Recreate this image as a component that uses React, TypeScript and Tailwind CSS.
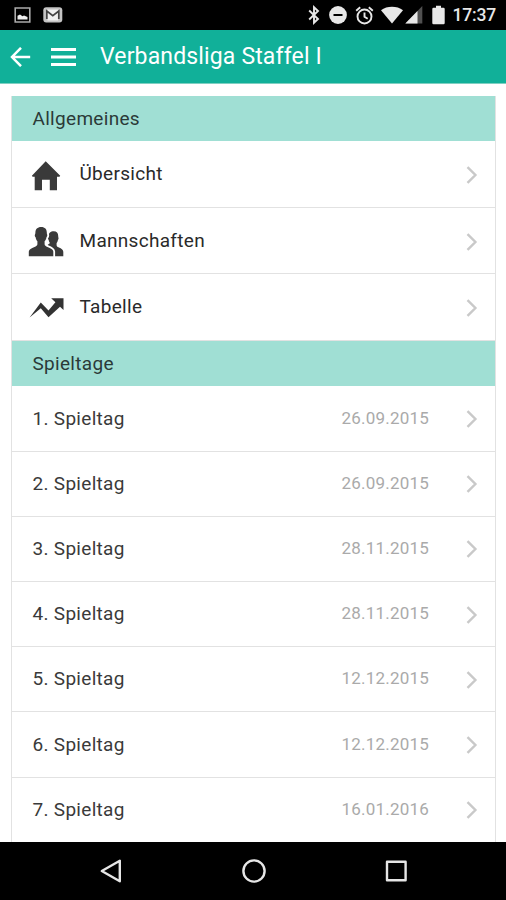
import type { ReactNode } from "react";

const links: { label: string; icon: ReactNode }[] = [
    {
        label: "Übersicht",
        icon: (
            <svg width="36" height="36" viewBox="0 0 36 36" fill="#3a3a3a">
                <path d="M17.700 4.200 32.200 18.700 31.500 19.800H29V33.300H21.800V22.800H14V33.300H6.700V19.800H4.600L3.900 18.700z" />
            </svg>
        ),
    },
    {
        label: "Mannschaften",
        icon: (
            <svg width="36" height="36" viewBox="0 0 36 36" fill="#3a3a3a">
                <path d="M25.700 8.200c3 0 4.500 1.900 4.500 4.800 0 .8.1 1.400.3 1.900.2.700-.1 1.600-.6 2.100-.2 1.500-.7 2.400-1.300 3v2.300c.1 1.200 1 1.700 2.300 2.300 2.600 1.100 4.100 2 4.400 4.100v4.500H22l-4-10 4-3.200V20c-.6-.6-1.100-1.500-1.300-3-.5-.5-.8-1.400-.6-2.100.2-.5.400-1.100.4-1.900 0-2.900 2.200-4.800 5.200-4.800z" />
                <path stroke="#fff" strokeWidth="3.600" paintOrder="stroke" d="M13.200 4c3.800 0 5.600 2.200 5.600 5.600 0 1 .1 1.700.4 2.200.3.700-.1 1.900-.7 2.500-.3 1.800-.9 3.100-1.900 3.900v3c.2 1.400 1.200 2 2.900 2.700 3.300 1.300 5.500 2.200 5.800 4.600v4.700H.8v-4.700c.4-2.400 2.400-3.300 5.700-4.600 1.700-.7 2.700-1.300 2.900-2.700v-3c-1-.8-1.500-2.100-1.800-3.900-.7-.6-1-1.800-.7-2.500.3-.5.500-1.200.5-2.200C7.400 6.200 9.400 4 13.200 4z" />
            </svg>
        ),
    },
    {
        label: "Tabelle",
        icon: (
            <svg width="36" height="36" viewBox="0 0 36 36" fill="#333">
                <path d="M23.200 8.300H35.500V20L32 16.800 20.500 27.200 12.800 18.300 1.600 27.400 12.800 12.600 20.500 20.500 27.400 12.200z" />
            </svg>
        ),
    },
];

const matchdays = [
    "26.09.2015",
    "26.09.2015",
    "28.11.2015",
    "28.11.2015",
    "12.12.2015",
    "12.12.2015",
    "16.01.2016",
];

const Chevron = () => (
    <svg className="mt-px shrink-0" width="12" height="20" viewBox="0 0 12 20" fill="none" stroke="#c9c9c9" strokeWidth="2.400">
        <path d="M1.500 2.200 9.400 10 1.500 17.800" />
    </svg>
);

const StatusBar = () => (
    <div className="flex h-[30px] shrink-0 items-center justify-between bg-black pr-[10px] pl-[14px] text-[#e8e8e8]">
        <div className="flex items-center gap-[12px]">
            <svg width="17" height="16" viewBox="0 0 17 16">
                <path d="M1.200 1h14.600v14H1.200z" fill="none" stroke="#aaa" strokeWidth="1.600" />
                <path d="M3.500 12.500V8.800L6 7.500l2.500 1.800 1.500-.8 3.500 1.500v2.500z" fill="#eee" />
            </svg>
            <svg width="20" height="16" viewBox="0 0 20 16">
                <rect x=".3" y=".3" width="19" height="15.200" rx="3" fill="#c4c4c4" />
                <path d="M4.500 2.500h10.600v11H4.500z" fill="#f0f0f0" />
                <path d="M3.800 12V4l6 4.600 6-4.600v8" fill="none" stroke="#444" strokeWidth="1.700" />
            </svg>
        </div>
        <div className="flex items-center">
            <svg width="12" height="20" viewBox="0 0 12 20" fill="none" stroke="currentColor" strokeWidth="1.900">
                <path d="M1.200 5.500 10 14 6 17.800V2.200L10 6 1.200 14.500" />
            </svg>
            <svg className="ml-[9px]" width="18" height="18" viewBox="0 0 18 18">
                <circle cx="9" cy="9" r="8.900" fill="currentColor" />
                <path d="M4.500 9h9" stroke="#000" strokeWidth="2" />
            </svg>
            <svg className="ml-[8px]" width="19" height="19" viewBox="0 0 19 19" fill="none" stroke="currentColor" strokeWidth="1.900">
                <circle cx="9.500" cy="10.500" r="7" />
                <path d="M9.500 6.500v4.300l3.200 2M1.200 4.700 5.200 1.300M17.800 4.700 13.800 1.300" />
            </svg>
            <svg className="ml-[7px]" width="22" height="18" viewBox="0 0 22 18">
                <path d="M0 4.200C6-.3 16-.3 22 4.200L11 17.500z" fill="currentColor" />
            </svg>
            <svg className="ml-[2px]" width="18" height="18" viewBox="0 0 18 18">
                <path d="M17.300 0v17.500H.3z" fill="#505050" />
                <path d="M12.500 5v12.500H.3z" fill="currentColor" />
            </svg>
            <svg className="ml-[9px]" width="13" height="20" viewBox="0 0 13 20" fill="currentColor">
                <path d="M4 .8h5v2h2.500q1.200 0 1.200 1.200v14q0 1.300-1.200 1.300h-10Q.3 19.300.3 18V4Q.3 2.800 1.500 2.800H4z" />
            </svg>
            <span className="mt-[2px] ml-[8px] text-[17.500px] leading-none font-medium tracking-[-0.200px]">17:37</span>
        </div>
    </div>
);

const AppBar = () => (
    <header className="flex h-[54px] shrink-0 items-center border-b border-[#7fd0c2] bg-[#11b099] pl-[10px] text-white">
        <svg width="21" height="20" viewBox="0 0 21 20" fill="none" stroke="currentColor" strokeWidth="2.500">
            <path d="M11 .8 2 10l9 9.200M2 10h18.200" />
        </svg>
        <svg className="ml-[20px]" width="25" height="20" viewBox="0 0 25 20" fill="none" stroke="currentColor" strokeWidth="3">
            <path d="M0 2.500h25M0 10h25M0 17.500h25" />
        </svg>
        <h1 className="ml-[24px] text-[23px] leading-none font-normal tracking-[0.150px]">Verbandsliga Staffel I</h1>
    </header>
);

const SectionTitle = ({ children }: { children: ReactNode }) => (
    <h2 className="flex h-[45.300px] items-center bg-[#a0dfd4] pt-px pl-[20.500px] text-[19px] tracking-[0.300px] text-[#2b3a38]">
        {children}
    </h2>
);

const NavBar = () => (
    <nav className="flex h-[58px] shrink-0 items-center justify-center gap-[119px] bg-black text-[#e6e6e6]">
        <svg width="24" height="26" viewBox="0 0 24 26" fill="none" stroke="currentColor" strokeWidth="2.400" strokeLinejoin="round">
            <path d="M22.800 2.700v20.600L4.800 13z" />
        </svg>
        <svg width="26" height="26" viewBox="0 0 26 26" fill="none" stroke="currentColor" strokeWidth="2.400">
            <circle cx="14" cy="13" r="10.600" />
        </svg>
        <svg width="24" height="26" viewBox="0 0 24 26" fill="none" stroke="currentColor" strokeWidth="2.400" strokeLinejoin="round">
            <path d="M2 3.800h18.600v18.400H2z" />
        </svg>
    </nav>
);

const App = () => {
    return (
        <div className="flex h-[900px] w-[506px] flex-col overflow-hidden bg-white font-[Roboto,sans-serif]">
            <StatusBar />
            <AppBar />
            <main className="min-h-0 flex-1 overflow-hidden pt-[12px] pr-[10px] pl-[11px]">
                <div className="border-x border-[#e2e2e2]">
                    <SectionTitle>Allgemeines</SectionTitle>
                    {links.map((link) => (
                        <div key={link.label} className="flex h-[66.600px] items-center border-b border-[#e2e2e2] pt-px pr-[17px] pl-[16px]">
                            {link.icon}
                            <span className="ml-[15.500px] flex-1 pb-[0.600px] text-[19px] tracking-[0.300px] text-[#2a2a2a]">{link.label}</span>
                            <Chevron />
                        </div>
                    ))}
                    <SectionTitle>Spieltage</SectionTitle>
                    {matchdays.map((date, i) => (
                        <div key={i} className="flex h-[65.200px] items-center border-b border-[#e2e2e2] pr-[17px] pl-[20.500px]">
                            <span className="flex-1 pt-px text-[19px] tracking-[0.300px] text-[#3a3a3a]">{i + 1}. Spieltag</span>
                            <span className="mr-[37px] text-[17px] tracking-[0.200px] text-[#aaa]">{date}</span>
                            <Chevron />
                        </div>
                    ))}
                </div>
            </main>
            <NavBar />
        </div>
    );
};

export default App;
